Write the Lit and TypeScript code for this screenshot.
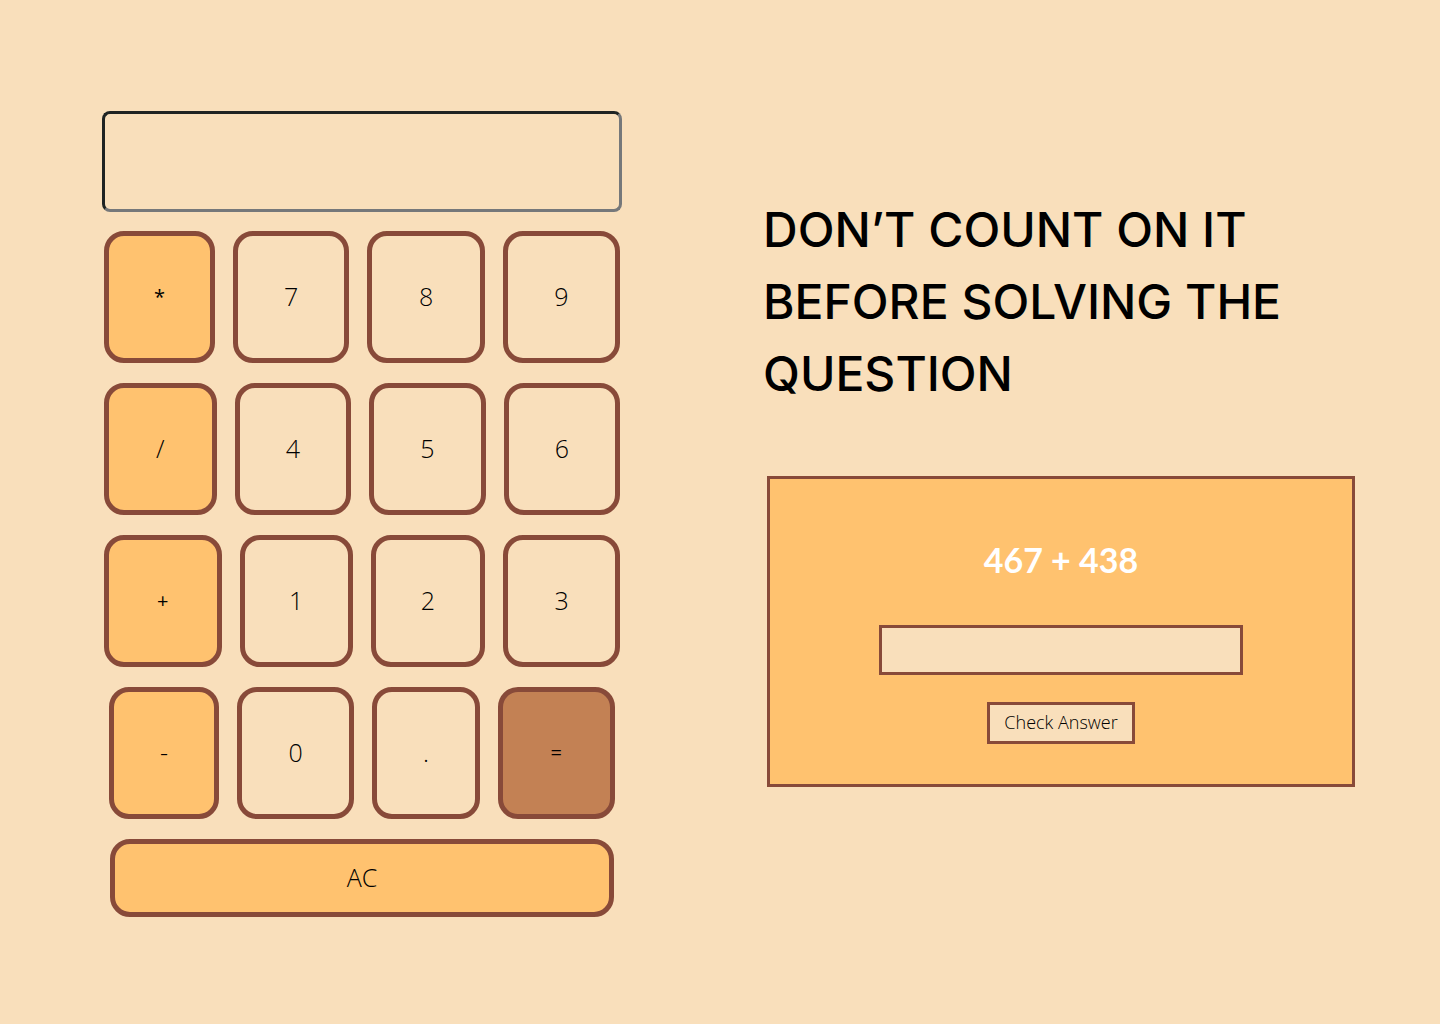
import { LitElement, html, css } from "lit";
import { customElement, state } from "lit/decorators.js";
import { classMap } from "lit/directives/class-map.js";
import { styleMap } from "lit/directives/style-map.js";

interface Key {
  label: string;
  // Share of the row that the key takes.
  size: number;
  kind?: "operator" | "equals";
  // Signs that are set smaller than the digits.
  small?: boolean;
}

const ROWS: Key[][] = [
  [
    { label: "*", size: 111, kind: "operator", small: true },
    { label: "7", size: 117 },
    { label: "8", size: 118 },
    { label: "9", size: 118 },
  ],
  [
    { label: "/", size: 113, kind: "operator" },
    { label: "4", size: 117 },
    { label: "5", size: 117 },
    { label: "6", size: 117 },
  ],
  [
    { label: "+", size: 118, kind: "operator", small: true },
    { label: "1", size: 113 },
    { label: "2", size: 115 },
    { label: "3", size: 117 },
  ],
  [
    { label: "-", size: 110, kind: "operator" },
    { label: "0", size: 118 },
    { label: ".", size: 107 },
    { label: "=", size: 118, kind: "equals", small: true },
  ],
];

@customElement("calc-pad")
export class CalcPad extends LitElement {
  static styles = css`
    :host {
      display: block;
    }
    .display {
      display: block;
      box-sizing: border-box;
      width: 100%;
      height: 101px;
      margin: 0 0 19px;
      padding: 0 20px;
      border: 3px solid;
      border-color: #1f2423 #76787a #76787a #1f2423;
      border-radius: 8px;
      background: transparent;
      font: 300 32px Lato, sans-serif;
      text-align: right;
    }
    .pad {
      display: flex;
      flex-direction: column;
      gap: 20px;
      padding: 0 2px;
    }
    .row {
      display: flex;
      gap: 18px;
    }
    .row.last {
      padding: 0 5px;
    }
    .key {
      box-sizing: border-box;
      min-width: 0;
      height: 132px;
      margin: 0;
      padding: 0 0 2px;
      border: 5px solid #884a39;
      border-radius: 20px;
      background: transparent;
      color: #000;
      font: 300 25px "Open Sans", sans-serif;
      cursor: pointer;
    }
    .operator {
      background: #ffc26f;
    }
    .equals {
      background: #c38154;
    }
    .small {
      font-size: 20px;
      font-weight: 400;
    }
    .clear {
      height: 78px;
      margin: 0 6px;
      background: #ffc26f;
    }
  `;

  @state() private entry = "";

  private press(label: string) {
    if (label !== "=") {
      this.entry += label;
      return;
    }
    this.entry = this.solve(this.entry);
  }

  private solve(text: string): string {
    const parts = text.match(/\d*\.?\d+|[-+*/]/g) ?? [];
    const terms: number[] = [Number(parts[0] ?? 0)];
    for (let i = 1; i + 1 < parts.length; i += 2) {
      const value = Number(parts[i + 1]);
      if (parts[i] === "*") terms.push(terms.pop()! * value);
      else if (parts[i] === "/") terms.push(terms.pop()! / value);
      else terms.push(parts[i] === "-" ? -value : value);
    }
    return String(terms.reduce((sum, term) => sum + term, 0));
  }

  render() {
    return html`
      <input class="display" type="text" aria-label="Result" readonly .value=${this.entry} />
      <div class="pad">
        ${ROWS.map(
          (row, index) => html`
            <div class=${classMap({ row: true, last: index === ROWS.length - 1 })}>
              ${row.map(
                (key) => html`<button
                  type="button"
                  class=${classMap({
                    key: true,
                    operator: key.kind === "operator",
                    equals: key.kind === "equals",
                    small: key.small === true,
                  })}
                  style=${styleMap({ flex: `${key.size} 1 0` })}
                  @click=${() => this.press(key.label)}
                >${key.label}</button>`
              )}
            </div>
          `
        )}
        <button type="button" class="key clear" @click=${() => (this.entry = "")}>AC</button>
      </div>
    `;
  }
}

@customElement("quiz-card")
export class QuizCard extends LitElement {
  static styles = css`
    :host {
      display: block;
    }
    .card {
      display: flex;
      flex-direction: column;
      align-items: center;
      padding: 59px 24px 40px;
      border: 3px solid #884a39;
      background: #ffc26f;
    }
    .question {
      margin: 0;
      color: #fff;
      font: 700 34px/44px Lato, sans-serif;
    }
    .answer {
      box-sizing: border-box;
      width: 68%;
      height: 50px;
      margin: 43px 0 27px;
      padding: 0 12px;
      border: 3px solid #884a39;
      border-radius: 0;
      background: #f9dfbb;
      font: 300 18px "Open Sans", sans-serif;
    }
    .check {
      height: 42px;
      margin: 0;
      padding: 0 14px 2px;
      border: 3px solid #884a39;
      border-radius: 0;
      background: #f9dfbb;
      color: #000;
      font: 300 18px "Open Sans", sans-serif;
      cursor: pointer;
    }
  `;

  render() {
    return html`
      <form class="card" @submit=${(event: Event) => event.preventDefault()}>
        <label class="question" for="answer">467 + 438</label>
        <input class="answer" id="answer" type="text" autocomplete="off" />
        <button class="check" type="submit">Check Answer</button>
      </form>
    `;
  }
}

@customElement("app-root")
export class AppRoot extends LitElement {
  static styles = css`
    :host {
      display: block;
      min-height: 100vh;
      background: #f9dfbb;
    }
    .page {
      display: grid;
      grid-template-columns: 520fr 592fr;
      gap: 141px;
      padding: 111px 85px 107px 102px;
    }
    .side {
      padding-top: 83px;
    }
    .title {
      margin: 0 0 66px;
      color: #000;
      font: 500 48px/72px Inter, sans-serif;
    }
    .quiz {
      margin-left: 4px;
    }
  `;

  render() {
    return html`
      <main class="page">
        <calc-pad></calc-pad>
        <section class="side">
          <h1 class="title">DON’T COUNT ON IT BEFORE SOLVING THE QUESTION</h1>
          <quiz-card class="quiz"></quiz-card>
        </section>
      </main>
    `;
  }
}
